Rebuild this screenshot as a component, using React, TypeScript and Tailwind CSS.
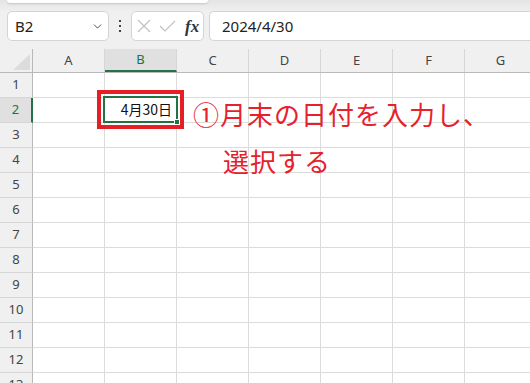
import React from 'react';
import { ChevronDown } from 'lucide-react';

const columns = ['A', 'B', 'C', 'D', 'E', 'F', 'G'];
const rows = Array.from({ length: 13 }, (_, i) => i + 1);

const uiFont = { fontFamily: '"Noto Sans", "Noto Sans CJK JP", sans-serif' };
const jpFont = { fontFamily: '"Noto Sans CJK JP", "Noto Sans", sans-serif' };

function CornerTriangle() {
    return (
        <svg width="17" height="16" viewBox="0 0 17 16" className="absolute left-[13px] top-[5px]">
            <polygon points="17,0 17,16 0,16" fill="#dcdcdc" />
        </svg>
    );
}

function FormulaBar() {
    return (
        <div className="flex h-[30px] items-stretch">
            <div className="ml-[7px] flex w-[102px] items-center justify-between rounded-[5px] border border-[#d4d4d4] bg-white pl-[7px] pr-[4px]">
                <span className="text-[15px] text-[#222]">B2</span>
                <ChevronDown size={13} strokeWidth={1.6} className="text-[#333]" />
            </div>
            <div className="flex w-[22px] items-center justify-center">
                <svg width="4" height="12" viewBox="0 0 4 12">
                    <rect x="1" y="0" width="2" height="2" fill="#444" />
                    <rect x="1" y="5" width="2" height="2" fill="#444" />
                    <rect x="1" y="10" width="2" height="2" fill="#444" />
                </svg>
            </div>
            <div className="flex w-[73px] items-center rounded-[5px] border border-[#d4d4d4] bg-white pl-[5px]">
                <svg width="14" height="14" viewBox="0 0 14 14" className="ml-[0px]">
                    <path d="M1 1 L13 13 M13 1 L1 13" stroke="#c2c2c2" strokeWidth="1.2" fill="none" />
                </svg>
                <svg width="17" height="12" viewBox="0 0 17 12" className="ml-[8px]">
                    <path d="M1 6 L6 11 L16 1" stroke="#c2c2c2" strokeWidth="1.2" fill="none" />
                </svg>
                <span
                    className="ml-[9px] text-[17px] font-bold italic leading-none text-[#333]"
                    style={{ fontFamily: '"Liberation Serif", serif' }}
                >
                    fx
                </span>
            </div>
            <div className="ml-[5px] flex flex-1 items-center rounded-l-[5px] border border-r-0 border-[#d4d4d4] bg-white pl-[12px]">
                <span className="text-[15px] text-[#222]">2024/4/30</span>
            </div>
        </div>
    );
}

export default function App() {
    return (
        <div className="relative h-[383px] w-[530px] overflow-hidden bg-[#f0f0f0]" style={uiFont}>
            {/* ribbon edge */}
            <div className="h-[11px] bg-gradient-to-b from-[#e4e4e4] to-[#efefef]">
                <div className="ml-[7px] h-[3px] w-[201px] rounded-b-[5px] bg-white shadow-[0_1px_2px_rgba(0,0,0,0.15)]" />
            </div>

            <FormulaBar />

            <div className="h-[8px]" />

            {/* sheet */}
            <div className="w-[600px]">
                <div className="flex h-[24px] border-b border-[#b9b9b9]">
                    <div className="relative w-[33px] border-r border-[#b9b9b9]">
                        <CornerTriangle />
                    </div>
                    {columns.map(c => (
                        <div
                            key={c}
                            className={
                                c === 'B'
                                    ? 'flex w-[72px] items-center justify-center border-r border-b-2 border-r-[#d6d6d6] border-b-[#217346] bg-[#e0e0e0] text-[13px] text-[#217346]'
                                    : 'flex w-[72px] items-center justify-center border-r border-[#d6d6d6] text-[13px] text-[#444]'
                            }
                        >
                            {c}
                        </div>
                    ))}
                </div>

                {rows.map(r => (
                    <div key={r} className="flex h-[25px]">
                        <div
                            className={
                                r === 2
                                    ? 'flex w-[33px] items-center justify-center border-r-2 border-b border-r-[#217346] border-b-[#d6d6d6] bg-[#e0e0e0] text-[13px] text-[#217346]'
                                    : 'flex w-[33px] items-center justify-center border-r border-b border-r-[#b9b9b9] border-b-[#d6d6d6] text-[13px] text-[#444]'
                            }
                        >
                            {r}
                        </div>
                        {columns.map(c => (
                            <div key={c} className="relative w-[72px] border-r border-b border-[#dcdcdc] bg-white">
                                {r === 2 && c === 'B' && (
                                    <>
                                        <div className="absolute left-[-8px] top-[-8px] z-10 h-[39px] w-[87px] border-4 border-[#e61e26]" />
                                        <div className="absolute left-[-2px] top-[-2px] z-20 flex h-[27px] w-[75px] items-center justify-end border-2 border-[#217346] pr-[4px]">
                                            <span className="text-[14px] text-[#111]" style={jpFont}>4月30日</span>
                                            <div className="absolute left-[69px] top-[21px] h-[6px] w-[6px] border border-white bg-[#217346]" />
                                        </div>
                                    </>
                                )}
                            </div>
                        ))}
                    </div>
                ))}
            </div>

            {/* annotation */}
            <div
                className="absolute left-[193px] top-[90px] z-30 text-[26px] leading-[47px] tracking-[1px] text-[#e6212b]"
                style={jpFont}
            >
                <div>①月末の日付を入力し、</div>
                <div className="pl-[30px]">選択する</div>
            </div>
        </div>
    );
}
